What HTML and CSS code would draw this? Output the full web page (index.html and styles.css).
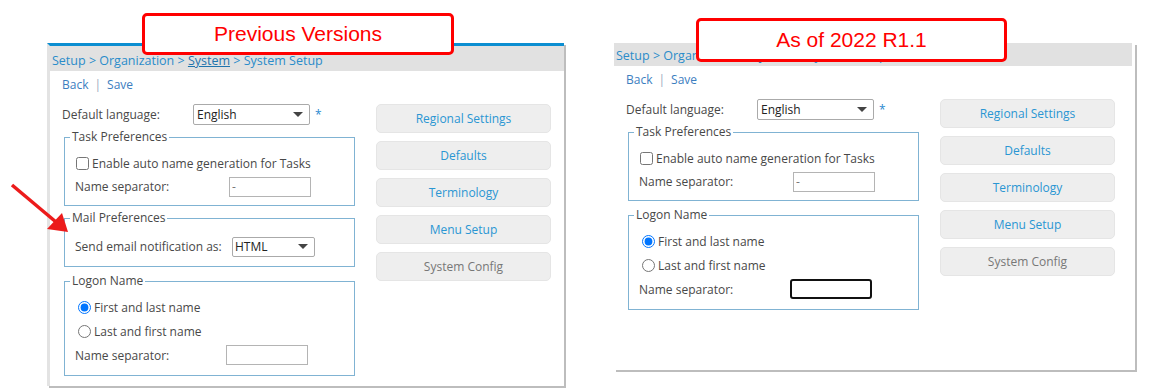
FILE: index.html
```html
<!DOCTYPE html>
<html lang="en">
<head>
    <meta charset="UTF-8">
    <meta name="viewport" content="width=device-width, initial-scale=1.0">
    <title>System Setup - Previous Versions vs 2022 R1.1</title>
    <link rel="stylesheet" href="styles.css">
</head>
<body>
    <div class="canvas">
        <!-- old screen -->
        <div class="panel panel-old">
            <div class="callout callout-old">Previous Versions</div>
            <div class="crumbs">Setup &gt; Organization &gt; <span class="crumb-link">System</span> &gt; System Setup</div>
            <div class="toolbar"><a href="#">Back</a><span class="sep">|</span><a href="#">Save</a></div>

            <div class="panel-body">
                <div class="form-col">
                    <div class="lang-row">
                        <label>Default language:</label>
                        <div class="select select-lang"><span>English</span><svg width="10" height="5" viewBox="0 0 10 5"><path d="M0 0h10L5 5z" fill="#444"/></svg></div>
                        <span class="req">*</span>
                    </div>

                    <fieldset class="task-prefs">
                        <legend>Task Preferences</legend>
                        <div class="field-row">
                            <input type="checkbox" class="check"><span>Enable auto name generation for Tasks</span>
                        </div>
                        <div class="field-row">
                            <label class="name-label">Name separator:</label>
                            <input type="text" class="text-input" value="-">
                        </div>
                    </fieldset>

                    <fieldset class="mail-prefs">
                        <legend>Mail Preferences</legend>
                        <div class="field-row">
                            <label class="mail-label">Send email notification as:</label>
                            <div class="select select-mail"><span>HTML</span><svg width="10" height="5" viewBox="0 0 10 5"><path d="M0 0h10L5 5z" fill="#444"/></svg></div>
                        </div>
                    </fieldset>

                    <fieldset class="logon">
                        <legend>Logon Name</legend>
                        <div class="field-row">
                            <input type="radio" name="order1" class="radio" checked><span>First and last name</span>
                        </div>
                        <div class="field-row">
                            <input type="radio" name="order1" class="radio"><span>Last and first name</span>
                        </div>
                        <div class="field-row">
                            <label class="logon-label">Name separator:</label>
                            <input type="text" class="text-input" value="">
                        </div>
                    </fieldset>
                </div>

                <div class="btn-col">
                    <div class="btn">Regional Settings</div>
                    <div class="btn">Defaults</div>
                    <div class="btn">Terminology</div>
                    <div class="btn">Menu Setup</div>
                    <div class="btn disabled">System Config</div>
                </div>
            </div>
        </div>

        <!-- new screen -->
        <div class="panel panel-new">
            <div class="callout callout-new">As of 2022 R1.1</div>
            <div class="crumbs">Setup &gt; Organization &gt; <span class="crumb-link">System</span> &gt; System Setup</div>
            <div class="toolbar"><a href="#">Back</a><span class="sep">|</span><a href="#">Save</a></div>

            <div class="panel-body">
                <div class="form-col">
                    <div class="lang-row">
                        <label>Default language:</label>
                        <div class="select select-lang"><span>English</span><svg width="10" height="5" viewBox="0 0 10 5"><path d="M0 0h10L5 5z" fill="#444"/></svg></div>
                        <span class="req">*</span>
                    </div>

                    <fieldset class="task-prefs">
                        <legend>Task Preferences</legend>
                        <div class="field-row">
                            <input type="checkbox" class="check"><span>Enable auto name generation for Tasks</span>
                        </div>
                        <div class="field-row">
                            <label class="name-label">Name separator:</label>
                            <input type="text" class="text-input" value="-">
                        </div>
                    </fieldset>

                    <fieldset class="logon">
                        <legend>Logon Name</legend>
                        <div class="field-row">
                            <input type="radio" name="order2" class="radio" checked><span>First and last name</span>
                        </div>
                        <div class="field-row">
                            <input type="radio" name="order2" class="radio"><span>Last and first name</span>
                        </div>
                        <div class="field-row">
                            <label class="logon-label">Name separator:</label>
                            <input type="text" class="text-input focused" value="">
                        </div>
                    </fieldset>
                </div>

                <div class="btn-col">
                    <div class="btn">Regional Settings</div>
                    <div class="btn">Defaults</div>
                    <div class="btn">Terminology</div>
                    <div class="btn">Menu Setup</div>
                    <div class="btn disabled">System Config</div>
                </div>
            </div>
        </div>

        <svg class="arrow" width="80" height="240" viewBox="0 0 80 240">
            <line x1="12" y1="185" x2="56" y2="222" stroke="#ec1b1b" stroke-width="3.5"/>
            <path d="M68 232L47 229L62 213z" fill="#ec1b1b"/>
        </svg>
    </div>
</body>
</html>
```

FILE: styles.css
```css
body {
    margin: 0;
    background: #fff;
    font-family: "Open Sans", "Noto Sans", sans-serif;
    font-size: 12px;
    color: #484848;
}
.canvas {
    position: relative;
    width: 1149px;
    height: 389px;
    box-sizing: border-box;
    padding: 43px 0 0 47px;
    display: flex;
    align-items: flex-start;
    gap: 50px;
}
.panel {
    position: relative;
    box-sizing: border-box;
    background: #fff;
    box-shadow: 2px 2px 0 #bdbdbd;
}
.panel-old {
    width: 517px;
    height: 343px;
    border-left: 3px solid #e3e3e3;
    border-top: 3px solid #0b8ed1;
}
.panel-new {
    width: 521px;
    height: 327px;
}

/* red annotation boxes */
.callout {
    position: absolute;
    z-index: 2;
    box-sizing: border-box;
    border: 3px solid #ff0000;
    border-radius: 5px;
    background: #fff;
    color: #ff0000;
    font-family: "Liberation Sans", Arial, sans-serif;
    font-size: 21px;
    display: flex;
    align-items: center;
    justify-content: center;
}
.callout-old {
    left: 92px;
    top: -33px;
    width: 312px;
    height: 42px;
}
.callout-new {
    left: 82px;
    top: -25px;
    width: 311px;
    height: 44px;
}
.arrow {
    position: absolute;
    left: 0;
    top: 0;
}

.crumbs {
    height: 25px;
    box-sizing: border-box;
    padding: 8px 0 0 2px;
    line-height: 14px;
    font-size: 12.5px;
    background: #e1e1e1;
    color: #2a8cca;
    white-space: nowrap;
    overflow: hidden;
}
.panel-new .crumbs {
    height: 23px;
    padding-top: 6px;
    margin-right: 3px;
}
.crumb-link {
    color: #1f74ad;
    text-decoration: underline;
}
.toolbar {
    padding: 5px 12px 0;
    line-height: 18px;
}
.toolbar a {
    color: #3c7ebf;
    text-decoration: none;
}
.sep {
    color: #9ab;
    margin: 0 6px;
}

.panel-body {
    display: flex;
    gap: 21px;
    padding: 10px 12px 0;
}
.form-col {
    width: 293px;
}
.lang-row {
    display: flex;
    align-items: center;
    height: 21px;
}
.lang-row label {
    width: 131px;
}
.select {
    display: flex;
    align-items: center;
    justify-content: space-between;
    box-sizing: border-box;
    height: 21px;
    padding: 0 6px 0 3px;
    border: 1px solid #aaa;
    border-radius: 2px;
    background: #fff;
    color: #222;
}
.select-lang {
    width: 117px;
}
.select-mail {
    width: 83px;
    height: 20px;
    padding-left: 2px;
}
.req {
    color: #2a8ad0;
    margin-left: 5px;
}

fieldset {
    width: 291px;
    min-width: 0;
    box-sizing: border-box;
    margin: 4px 0 0 2px;
    padding: 7px 10px 7px;
    border: 1px solid #80b3d3;
}
legend {
    margin-left: -5px;
    padding: 0 2px;
    line-height: 16px;
    color: #484848;
}
.mail-prefs {
    padding-top: 9px;
    padding-bottom: 8px;
}
.logon {
    margin-top: 6px;
    padding-top: 6px;
    padding-bottom: 8px;
}
.field-row {
    display: flex;
    align-items: center;
    height: 23px;
}
.logon .field-row {
    height: 24px;
}
.name-label {
    width: 154px;
}
.mail-label {
    width: 157px;
}
.logon-label {
    width: 151px;
}
.check {
    width: 13px;
    height: 13px;
    margin: 0 3px 0 1px;
}
.radio {
    width: 13px;
    height: 13px;
    margin: 0 3px 0 3px;
}
.text-input {
    width: 82px;
    height: 20px;
    box-sizing: border-box;
    padding: 0 2px;
    border: 1px solid #b4b4b4;
    font: inherit;
    color: #777;
    outline: none;
}
.text-input.focused {
    border: 2px solid #111;
    border-radius: 3px;
}

.btn-col {
    width: 175px;
    display: flex;
    flex-direction: column;
    gap: 8px;
}
.btn {
    height: 29px;
    box-sizing: border-box;
    border: 1px solid #e5e5e5;
    border-radius: 5px;
    background: #eeeeee;
    color: #2a96d3;
    display: flex;
    align-items: center;
    justify-content: center;
}
.btn.disabled {
    color: #777;
}
```
